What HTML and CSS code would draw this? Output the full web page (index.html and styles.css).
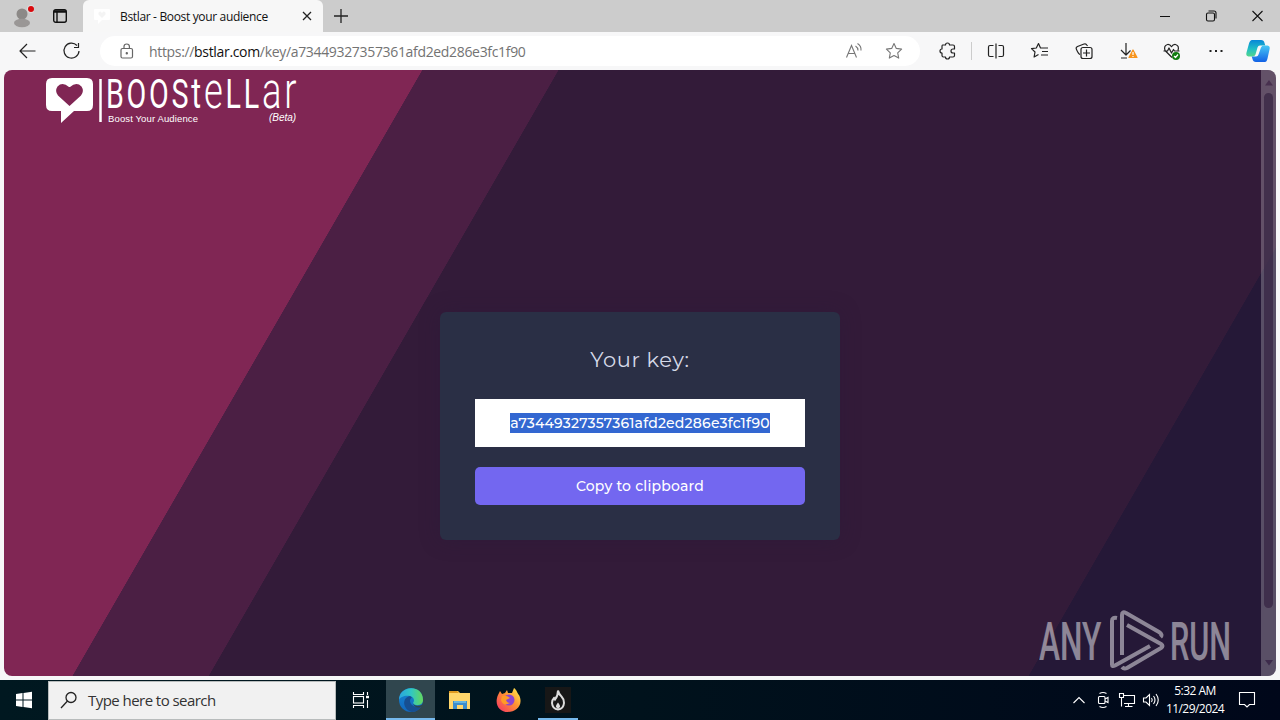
FILE: index.html
```
<!DOCTYPE html>
<html lang="en">
<head>
    <meta charset="UTF-8">
    <meta name="viewport" content="width=device-width, initial-scale=1.0">
    <link rel="stylesheet" href="styles.css">
    <title>Bstlar - Boost your audience</title>
</head>
<body>
    <header class="tabbar">
        <div class="profile">
            <svg width="24" height="28" viewBox="0 0 24 28">
                <circle cx="12" cy="12" r="5.5" fill="#8c8987"/>
                <ellipse cx="12" cy="21" rx="8" ry="4.2" fill="#9a9796"/>
                <circle cx="21" cy="7" r="4" fill="#ddd"/>
                <circle cx="21" cy="7" r="3" fill="#d9090d"/>
            </svg>
        </div>
        <svg class="workspaces" width="16" height="16" viewBox="0 0 16 16" fill="none" stroke="#111">
            <rect x="1.7" y="1.7" width="12.6" height="12.6" rx="2" stroke-width="1.4"/>
            <path d="M2 3.5h12" stroke-width="2.5"/>
            <path d="M5 4v10" stroke-width="1.4"/>
        </svg>
        <div class="tab">
            <svg width="18" height="18" viewBox="0 0 18 18"><path d="M2 2h14q1 0 1 1v9q0 1-1 1H9l-4 4v-4H2q-1 0-1-1V3q0-1 1-1z" fill="#fff"/><path d="M9 11 5.5 7.5Q5 4.500 7.500 4.500L9 6l1.500-1.500Q13 4.500 12.500 7.500z" fill="#f4f4f4"/></svg>
            <span class="tab-title">Bstlar - Boost your audience</span>
            <svg class="tab-close" width="10" height="10" viewBox="0 0 10 10"><path d="M1 1l8 8M9 1L1 9" stroke="#222" stroke-width="1.3"/></svg>
        </div>
        <svg class="newtab" width="14" height="14" viewBox="0 0 14 14"><path d="M7 0v14M0 7h14" stroke="#222" stroke-width="1.3"/></svg>
        <div class="window-buttons">
            <svg width="46" height="32" viewBox="0 0 46 32"><path d="M18 16.500h10" stroke="#111"/></svg>
            <svg width="46" height="32" viewBox="0 0 46 32" fill="none" stroke="#111" stroke-width="1.100"><rect x="18.500" y="13" width="8" height="8" rx="1.500"/><path d="M20.500 11h5.500q2 0 2 2v5.500"/></svg>
            <svg width="46" height="32" viewBox="0 0 46 32"><path d="M18.500 11l10 10M28.500 11l-10 10" stroke="#111" stroke-width="1.100"/></svg>
        </div>
    </header>

    <nav class="toolbar">
        <svg class="tool" viewBox="0 0 44 38"><path d="M35.500 19H20M27 12l-7 7 7 7" /></svg>
        <svg class="tool" viewBox="0 0 44 38"><path d="M33 13.500A7.500 7.500 0 1 0 35 19M34.500 11v4.500h-4.500"/></svg>
        <div class="address">
            <svg class="lock" width="14" height="16" viewBox="0 0 14 16" fill="none" stroke="#666" stroke-width="1.200"><rect x="1" y="5.500" width="11.500" height="9.500" rx="1.500"/><path d="M4 5.500V3.500q0-2.500 2.700-2.500t2.700 2.500v2"/><circle cx="6.800" cy="10.300" r=".6" fill="#666"/></svg>
            <span class="url">https://<b>bstlar.com</b>/key/a73449327357361afd2ed286e3fc1f90</span>
            <svg class="read" width="18" height="18" viewBox="0 0 18 18" fill="none" stroke="#777" stroke-width="1.100"><path d="M1.500 15.500L6.500 3.500l5 12M3.300 11.500h6.500M10.500 4q2.500 1.500 2.500 4.500M12.500 1.500q4 2.500 3.500 7"/></svg>
            <svg width="18" height="18" viewBox="0 0 18 18" fill="none" stroke="#777" stroke-width="1.100" stroke-linejoin="round"><path d="M9 1.500l2.300 4.900 5.300.7-3.900 3.700 1 5.300L9 13.500l-4.700 2.600 1-5.300L1.400 7.100l5.300-.7z"/></svg>
        </div>
        <svg class="tool" viewBox="0 0 44 38"><path d="M16.500 13h3a2 2 0 1 1 4 0H27q1.500 0 1.500 1.500V17H27a2 2 0 1 0 0 4h1.500v2.500q0 1.500-1.500 1.500h-3.500a2 2 0 1 1-4 0h-2q-1.500 0-1.500-1.500V21a2 2 0 1 1 0-4v-2.500q0-1.500.5-1.500z"/></svg>
        <span class="divider"></span>
        <svg class="tool" viewBox="0 0 44 38"><path d="M19.500 13.500h-3.500q-1.500 0-1.500 1.500v8q0 1.500 1.500 1.500h3.500M24.500 13.500H28q1.500 0 1.500 1.500v8q0 1.500-1.500 1.500h-3.500M22 11.500v15"/></svg>
        <svg class="tool" viewBox="0 0 44 38"><path d="M24.500 16h-2L20.500 11.500l-2.200 4.500-4.800.6 3.500 3.400-.9 5L20.500 22.500M24 16h6M24 19.500h6M23 23h7"/></svg>
        <svg class="tool" viewBox="0 0 44 38"><path d="M18 22.500q-1.500-.5-3.500-5-1-2 1-3l6.500-2.500q2-.7 2.800 1l.7 1"/><rect x="19" y="15.500" width="11" height="11" rx="2"/><path d="M24.500 17.500v7M21 21h7"/></svg>
        <svg class="tool" viewBox="0 0 44 38"><path d="M20 11v12M15 18l5 5 4.500-4.500M15 26h6"/><path d="M27 18l4 7.500h-8z" fill="#f7941d" stroke="#f7941d"/><path d="M27 20v3M27 24v1" stroke="#fff"/></svg>
        <svg class="tool" viewBox="0 0 44 38"><path d="M22 25.500l-7-7q-1.500-5 2.500-6 2.500-.3 4 2.200 1.500-2.500 4-2.200 4 1 2.500 6M13.500 19h4l1.500-3 2.500 5 2-3.500 1 1.500h5"/><circle cx="26" cy="24" r="4" fill="#107c10" stroke="none"/><path d="M24 24l1.500 1.500 2.500-3" stroke="#fff"/></svg>
        <svg class="tool" viewBox="0 0 44 38"><path d="M15.500 19h2M21 19h2M26.500 19h2" stroke-width="2"/></svg>
        <svg class="tool copilot" viewBox="0 0 44 38">
            <defs>
                <linearGradient id="cp1" x1="0" y1="0" x2="0" y2="1"><stop offset="0" stop-color="#0787d8"/><stop offset=".55" stop-color="#20bfc5"/><stop offset="1" stop-color="#54d68b"/></linearGradient>
                <linearGradient id="cp2" x1="0" y1="0" x2="0" y2="1"><stop offset="0" stop-color="#46c8f5"/><stop offset="1" stop-color="#1261e5"/></linearGradient>
            </defs>
            <path d="M16 8h9q3 0 3.500 3l.8 2.500H24q-2 0-2.500 2l-2 7q-.7 2-3 2h-4q-3-.5-2-4l2.500-9q1-3.500 3-3.500z" fill="url(#cp1)" stroke="none"/>
            <path d="M29 30h-9q-3 0-3.500-3l-.8-2.500H20q2 0 2.500-2l2.500-7q.7-2 3-2h3.500q3 .5 2 4l-2 9q-.8 3.500-2.500 3.500z" fill="url(#cp2)" stroke="none"/>
        </svg>
    </nav>

    <main class="page">
        <div class="logo">
            <svg width="256" height="50" viewBox="0 0 256 50">
                <path d="M7 1h35q6 0 6 6v21q0 6-6 6H29L16 46V34H7q-6 0-6-6V7q0-6 6-6z" fill="#fff"/>
                <path d="M24.500 29L13 18.500Q9.500 14 12.500 9.500q5-5 11.500.5h1q6.500-5.500 11.500-.5 3 4.500-.5 9z" fill="#802654"/>
                <path d="M55.500 2v43" stroke="#fff" stroke-width="2.500"/>
                <g class="logo-name" transform="translate(61 31) scale(.7 1)"><text textLength="272" lengthAdjust="spacing">BOOS<tspan class="mid">t</tspan><tspan class="tall">e</tspan>LL<tspan class="tall">ar</tspan></text></g>
                <text class="logo-sub" x="63" y="45" textLength="90">Boost Your Audience</text>
                <text class="logo-beta" x="224" y="44" textLength="27">(Beta)</text>
            </svg>
        </div>

        <div class="card">
            <h1>Your key:</h1>
            <div class="key"><span>a73449327357361afd2ed286e3fc1f90</span></div>
            <button class="copy">Copy to clipboard</button>
        </div>

        <div class="scrollbar">
            <svg width="8" height="6" viewBox="0 0 8 6"><path d="M4 0l4 5.500H0z" fill="#48304f"/></svg>
            <div class="thumb"></div>
            <svg width="8" height="6" viewBox="0 0 8 6"><path d="M4 5.500L8 0H0z" fill="#3d2b4b"/></svg>
        </div>

        <svg class="watermark" width="200" height="70" viewBox="0 0 200 70">
            <g transform="translate(4 54) scale(.63 1)"><text textLength="99" lengthAdjust="spacingAndGlyphs">ANY</text></g>
            <g fill="none" stroke="#fff" stroke-width="4" stroke-linejoin="round" stroke-linecap="butt">
                <path d="M82 12q-5-1-5 3v43.500q0 2.500 3 1L115 40"/>
                <path d="M87 49V9q0-4 4-2l33 19q4 2.500 1.500 5"/>
                <path d="M92 19l34 19q3 2 0 4L92 62q-3 1.500-5-1"/>
            </g>
            <g transform="translate(135 54) scale(.63 1)"><text textLength="97" lengthAdjust="spacingAndGlyphs">RUN</text></g>
        </svg>
    </main>

    <footer class="taskbar">
        <div class="start"><svg width="18" height="18" viewBox="0 0 18 18" fill="#fff"><path d="M1 3l6.500-1v6.500H1zM8.500 1.900L17 .8v7.700H8.500zM1 9.500h6.500V16L1 15zM8.500 9.500H17v7.700l-8.500-1.100z"/></svg></div>
        <div class="search">
            <svg width="18" height="18" viewBox="0 0 18 18" fill="none" stroke="#222" stroke-width="1.300"><circle cx="11" cy="6.500" r="5"/><path d="M7.500 10L1 17"/></svg>
            <span>Type here to search</span>
        </div>
        <div class="app"><svg width="18" height="18" viewBox="0 0 18 18" fill="none" stroke="#fff" stroke-width="1.100"><path d="M1.500 1v2.500h10V1M1.500 17v-2.500h10V17"/><rect x="1.500" y="5.500" width="10" height="6.500"/><path d="M15.500 1v3M15.500 9v8"/><path d="M14 6h3" stroke-width="2.500"/></svg></div>
        <div class="app active wide">
            <svg width="26" height="26" viewBox="0 0 26 26">
                <defs>
                    <linearGradient id="ed1"><stop offset="0" stop-color="#2aa5df"/><stop offset=".5" stop-color="#30c7c4"/><stop offset="1" stop-color="#65d85b"/></linearGradient>
                    <linearGradient id="ed2" x1="0" y1="0" x2="0" y2="1"><stop offset="0" stop-color="#1687d2"/><stop offset="1" stop-color="#1267bd"/></linearGradient>
                </defs>
                <circle cx="13" cy="13" r="12" fill="url(#ed2)"/>
                <path d="M1 13C1-2 25-3 25 13c0 6-8 6.500-10 3 2-2 1-6-3-7-5-1-10 1-11 4z" fill="url(#ed1)"/>
                <path d="M12 9c-9 2-7 14 2 16 4 0 8-3 9.500-6-5 2.500-11 0-11.500-5 0-2 1-3 2-3.500z" fill="#174f91"/>
                <path d="M15 16.500c2 3 7 3 10 .5l-1.500 3c-4 1.500-7.500 0-8.500-3.500z" fill="#30464e"/>
            </svg>
        </div>
        <div class="app wide">
            <svg width="22" height="20" viewBox="0 0 22 20"><path d="M0 1h9l2 2h10v16H0z" fill="#ffd66b"/><path d="M0 1h8l2 2H0z" fill="#df9a20"/><path d="M4 11h14v8h-4v-4H8v4H4z" fill="#3c8dcc"/><path d="M5 11h12v2H5z" fill="#65b5df"/></svg>
        </div>
        <div class="app wide">
            <svg width="26" height="26" viewBox="0 0 26 26">
                <defs><linearGradient id="ff" x1="1" y1="0" x2="0" y2="1"><stop offset="0" stop-color="#fff44f"/><stop offset=".45" stop-color="#ff9232"/><stop offset="1" stop-color="#f42c68"/></linearGradient></defs>
                <path d="M2 8l2-4 2 3 3-1 2-3 1 3 4 0 2-5c3 2 3 5 5 7 5 10-3 17-11 17C3 25-2 17 2 8z" fill="url(#ff)"/>
                <circle cx="13" cy="13" r="5.500" fill="#8d45cf"/><path d="M6 9q5-1 8 2l-4 2q1 3 4 3-7 4-9-3z" fill="#ff9b26"/>
            </svg>
        </div>
        <div class="app running wide"><div class="flame"><svg width="16" height="22" viewBox="0 0 16 22" fill="none" stroke="#ddd" stroke-width="2"><path d="M8 1.500q1 4 3.500 6Q14 10 14 14q-.5 6-6 6.500Q2.500 20 2 14q0-3 2-5l1 1.500Q8 7 8 1.500z"/><path d="M8 13.500q-2.500 3-2 4.500l2 2 2-2Q10.500 16.500 8 13.500z" fill="#ddd" stroke="none"/></svg></div></div>
        <div class="tray">
            <svg width="24" height="20" viewBox="0 0 24 20"><path d="M6.500 13L12 7.500l5.500 5.500"/></svg>
            <svg width="24" height="20" viewBox="0 0 24 20"><rect x="7.500" y="6.500" width="6.500" height="7" rx="1"/><path d="M14 9l3-1.500v5L14 11M8.500 3.500q3.500-2 7 0M8.500 16.500q3.500 2 7 0"/></svg>
            <svg width="24" height="20" viewBox="0 0 24 20"><path d="M9 5.500h10.500v8H9M13.500 13.500v3M10 16.500h7.500M4.500 3.500h4v4h-4zM6.500 7.500v9"/></svg>
            <svg width="24" height="20" viewBox="0 0 24 20"><path d="M4.500 8h2.500l3.500-3.500v11L7 12H4.500zM12.500 8q1.500 2 0 4M14.500 6q3 4 0 8M17 4q4.500 6 0 12"/></svg>
            <div class="clock"><span>5:32 AM</span><span>11/29/2024</span></div>
            <svg class="notify" width="18" height="18" viewBox="0 0 18 18"><path d="M1.500 1.500h15v12h-5L9 16l-2.500-2.500h-5z"/></svg>
        </div>
    </footer>
</body>
</html>
```
FILE: styles.css
```
* {
    box-sizing: border-box;
}

html, body {
    width: 100%;
    height: 100%;

    margin: 0;
    padding: 0;

    overflow: hidden;
}

body {
    display: flex;
    flex-direction: column;

    background-color: #f7f7f8;

    font-family: "Open Sans", "Noto Sans", sans-serif;
}

svg {
    flex-shrink: 0;
}

/*

    TABS

*/

.tabbar {
    display: flex;
    align-items: center;

    height: 32px;
    flex-shrink: 0;

    background-color: #ccc;
}

.profile {
    height: 28px;

    margin-left: 10px;
}

.workspaces {
    margin-left: 18px;
}

.tab {
    display: flex;
    align-items: center;

    width: 240px;
    height: 32px;

    margin-left: 15px;
    padding: 0 11px 0 10px;

    border-radius: 6px 6px 0 0;

    background-color: #f7f7f7;
}

.tab-title {
    margin-left: 9px;

    font-size: 12px;
    letter-spacing: -0.34px;
    white-space: nowrap;
    color: #111;
}

.tab-close {
    margin-left: auto;
}

.newtab {
    margin-left: 11px;
}

.window-buttons {
    display: flex;

    margin-left: auto;
}

/*

    TOOLBAR

*/

.toolbar {
    display: flex;
    align-items: center;

    height: 38px;
    flex-shrink: 0;
}

.tool {
    width: 44px;
    height: 38px;

    fill: none;
    stroke: #222;
    stroke-width: 1.2;
    stroke-linejoin: round;
}

.address {
    display: flex;
    align-items: center;

    width: 820px;
    height: 30px;

    margin-left: 12px;
    margin-right: 6px;
    padding: 0 17px 0 20px;
    flex-shrink: 0;

    border-radius: 15px;

    background-color: white;
}

.url {
    margin-left: 15px;

    font-size: 14px;
    letter-spacing: -0.33px;
    white-space: nowrap;
    color: #737373;
}

.url b {
    font-weight: normal;
    color: #111;
}

.read {
    margin-left: auto;
    margin-right: 22px;
}

.divider {
    width: 1px;
    height: 18px;

    margin: 0 2px 0 1px;
    flex-shrink: 0;

    background-color: #ccc;
}

.copilot {
    margin-left: -2px;
}

/*

    PAGE

*/

.page {
    position: relative;

    display: flex;
    justify-content: center;
    align-items: center;

    height: 606px;

    margin: 0 4px 4px;
    flex-shrink: 0;

    overflow: hidden;

    border-radius: 8px;

    background-image: linear-gradient(120deg, #802654 362px, #4b1f44 362.500px, #4b1f44 480px, #331b39 480.500px, #331b39 1190px, #251837 1190.500px);
}

.logo {
    position: absolute;
    top: 7px;
    left: 41px;
}

.logo svg {
    overflow: visible;
}

.logo text {
    fill: white;
}

.logo-name text {
    font-family: "Roboto", sans-serif;
    font-size: 41px;
    font-weight: 400;
}

.logo-name .mid {
    font-size: 43px;
}

.logo-name .tall {
    font-size: 52px;
    font-weight: 300;
}

.logo-sub {
    font-family: "Liberation Sans", sans-serif;
    font-size: 9.5px;
}

.logo-beta {
    font-family: "Liberation Sans", sans-serif;
    font-size: 10px;
    font-style: italic;
}

.card {
    display: flex;
    flex-direction: column;
    align-items: stretch;

    width: 400px;
    height: 228px;

    margin-top: 106px;
    padding: 31px 35px 35px;

    border-radius: 6px;

    background-color: #2a2f45;
    box-shadow: 0 0 20px rgba(40, 26, 56, 0.35);

    font-family: "Montserrat", "Inter", sans-serif;
}

.card h1 {
    height: 34px;

    margin: 0 0 22px;

    font-size: 21px;
    font-weight: 400;
    line-height: 34px;
    letter-spacing: 0.6px;
    text-align: center;
    color: #d5d9e8;
}

.key {
    display: flex;
    justify-content: center;
    align-items: center;

    height: 48px;

    margin-bottom: 20px;

    background-color: white;
}

.key span {
    height: 20px;

    background-color: #3367d1;

    font-size: 14px;
    font-weight: 500;
    line-height: 20px;
    letter-spacing: 0.2px;
    color: white;
}

.copy {
    height: 38px;

    border: none;
    border-radius: 5px;

    background-color: #7367f0;

    font-family: inherit;
    font-size: 14px;
    font-weight: 500;
    letter-spacing: 0.2px;
    color: white;
}

.scrollbar {
    position: absolute;
    top: 0;
    right: 0;

    display: flex;
    flex-direction: column;
    align-items: center;

    width: 15px;
    height: 606px;

    padding: 10px 0;

    background-color: rgba(255, 255, 255, 0.24);
}

.thumb {
    width: 9px;
    height: 515px;

    margin: 7px 0 52px;

    border-radius: 5px;

    background-color: rgba(47, 27, 60, 0.62);
}

.watermark {
    position: absolute;
    right: 41px;
    bottom: 0;

    opacity: 0.48;
}

.watermark text {
    font-family: "Roboto", sans-serif;
    font-size: 53px;
    font-weight: 500;

    fill: white;
}

/*

    TASKBAR

*/

.taskbar {
    display: flex;
    align-items: center;

    height: 40px;
    flex-shrink: 0;

    background-image: linear-gradient(90deg, #001820, #00121c 50%, #00071a);
}

.start {
    display: flex;
    justify-content: center;
    align-items: center;

    width: 48px;
    height: 40px;
}

.search {
    display: flex;
    align-items: center;

    width: 288px;
    height: 39px;

    padding-left: 11px;

    border: 1px solid #b8bcbc;

    background-color: #f1f1f1;
}

.search span {
    margin-left: 10px;

    font-size: 15px;
    letter-spacing: -0.55px;
    color: #333;
}

.app {
    display: flex;
    justify-content: center;
    align-items: center;

    width: 50px;
    height: 40px;
}

.app.wide {
    width: 49px;
}

.active {
    background-color: #30464e;
    box-shadow: inset 0 -2px #76b9ed;
}

.running {
    background: linear-gradient(#76b9ed, #76b9ed) center bottom / 40px 2px no-repeat;
}

.flame {
    display: flex;
    justify-content: center;
    align-items: center;

    width: 26px;
    height: 26px;

    background-color: #171717;
}

.tray {
    display: flex;
    align-items: center;

    height: 40px;

    margin-left: auto;
    padding-right: 24px;
}

.tray svg {
    fill: none;
    stroke: white;
    stroke-width: 1.1;
}

.clock {
    display: flex;
    flex-direction: column;

    width: 64px;

    font-size: 12px;
    line-height: 18px;
    letter-spacing: -0.55px;
    text-align: center;
    color: white;
}

.notify {
    margin-left: 11px;
}
```
